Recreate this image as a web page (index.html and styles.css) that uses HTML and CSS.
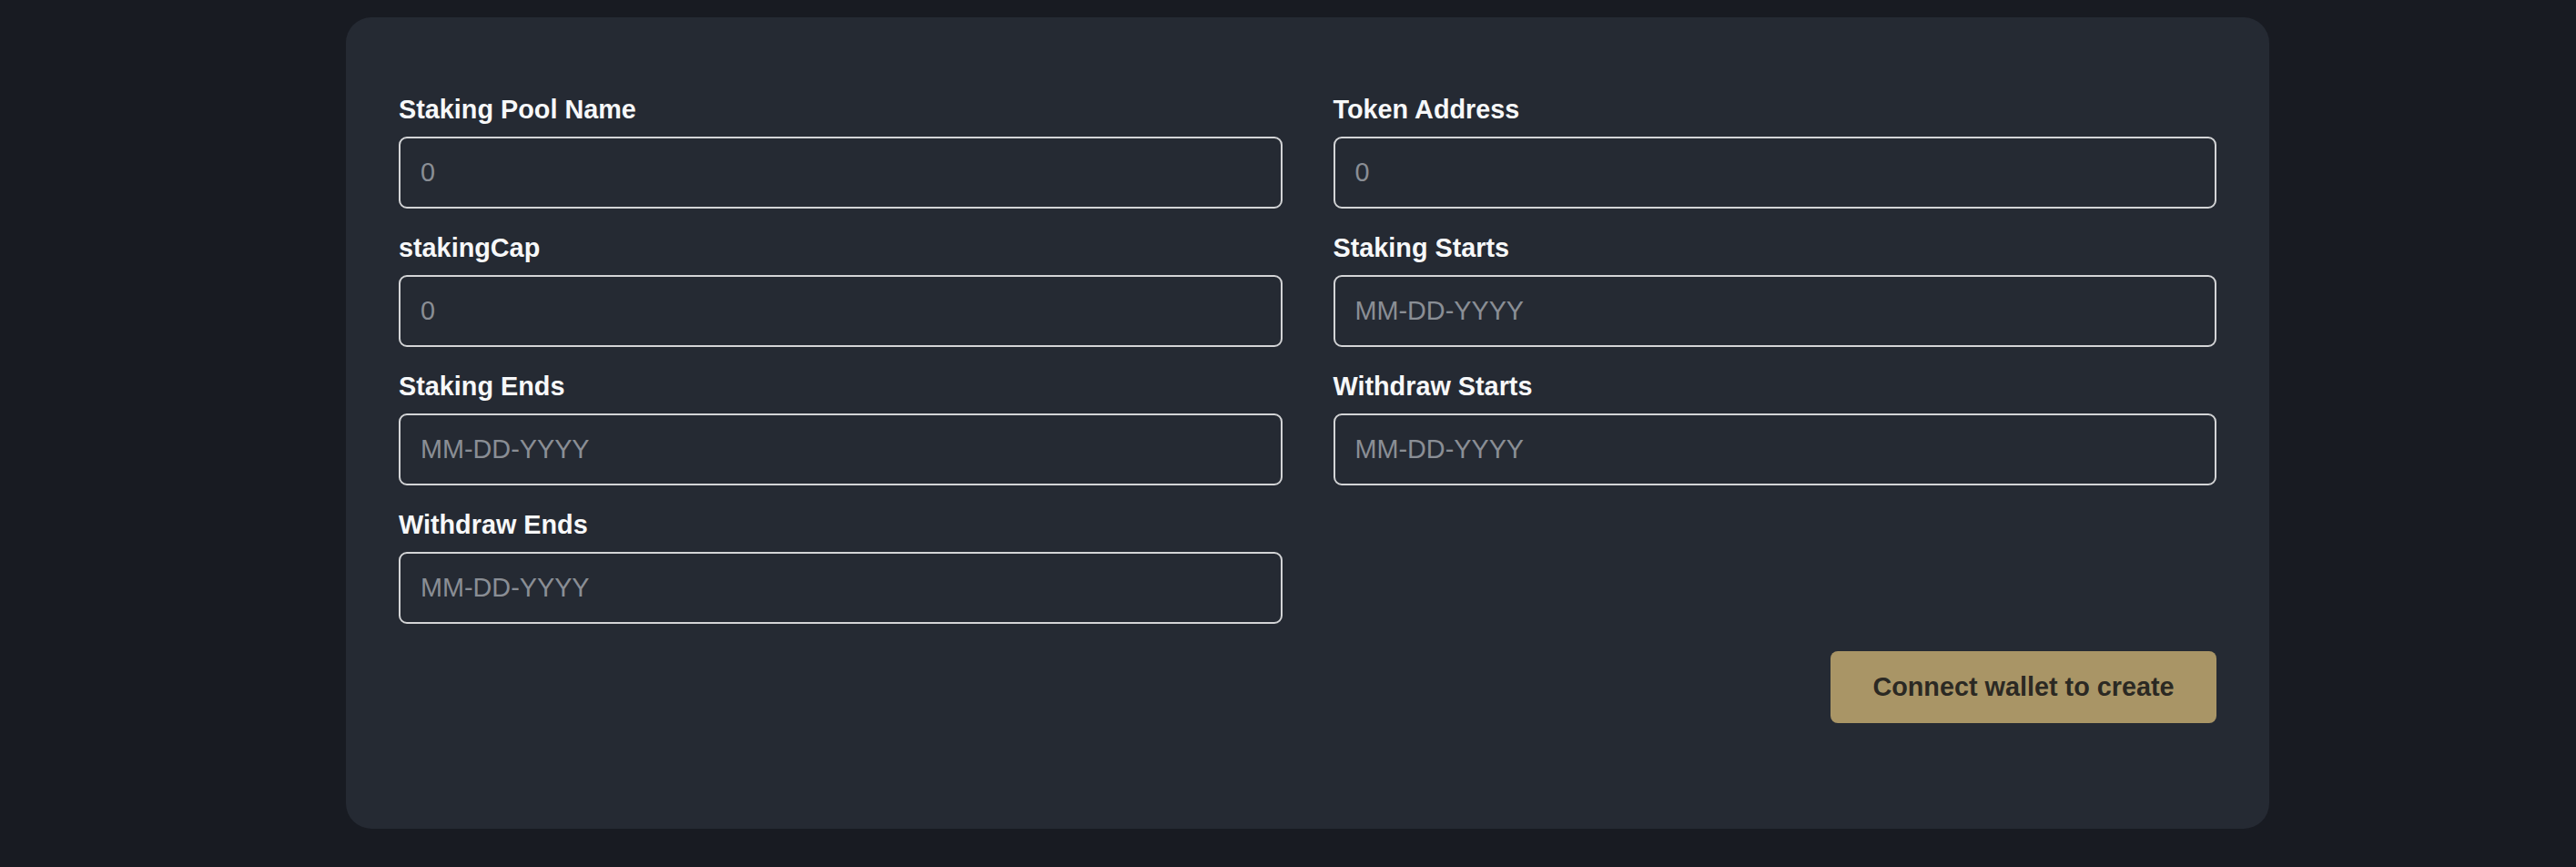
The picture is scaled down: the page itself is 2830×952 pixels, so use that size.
FILE: index.html
```html
<!DOCTYPE html>
<html>
<head>
<meta charset="utf-8">
<link rel="stylesheet" href="styles.css">
</head>
<body>
<main class="card">
  <form class="form">
    <div class="grid">
      <div class="field">
        <label class="label">Staking Pool Name</label>
        <input class="input" type="text" placeholder="0">
      </div>
      <div class="field">
        <label class="label">Token Address</label>
        <input class="input" type="text" placeholder="0">
      </div>
      <div class="field">
        <label class="label">stakingCap</label>
        <input class="input" type="text" placeholder="0">
      </div>
      <div class="field">
        <label class="label">Staking Starts</label>
        <input class="input" type="text" placeholder="MM-DD-YYYY">
      </div>
      <div class="field">
        <label class="label">Staking Ends</label>
        <input class="input" type="text" placeholder="MM-DD-YYYY">
      </div>
      <div class="field">
        <label class="label">Withdraw Starts</label>
        <input class="input" type="text" placeholder="MM-DD-YYYY">
      </div>
      <div class="field">
        <label class="label">Withdraw Ends</label>
        <input class="input" type="text" placeholder="MM-DD-YYYY">
      </div>
    </div>
    <div class="actions">
      <button class="btn" type="button">Connect wallet to create</button>
    </div>
  </form>
</main>
</body>
</html>
```
FILE: styles.css
```css
html, body {
  margin: 0;
  padding: 0;
  background: #181b22;
  height: 100%;
}
body {
  font-family: "Liberation Sans", Arial, sans-serif;
}
.card {
  box-sizing: border-box;
  width: 2113px;
  height: 891px;
  margin: 19px 0 0 380px;
  padding: 84px 58px 114px;
  background: #252a33;
  border-radius: 28px;
}
.form {
  display: flex;
  flex-direction: column;
}
.grid {
  display: grid;
  grid-template-columns: 1fr 1fr;
  column-gap: 56px;
  row-gap: 26px;
}
.field {
  display: flex;
  flex-direction: column;
  gap: 13px;
}
.label {
  font-size: 28.8px;
  line-height: 34px;
  font-weight: 700;
  color: #f7f8f9;
}
.input {
  box-sizing: border-box;
  height: 79px;
  width: 100%;
  margin: 0;
  padding: 0 22px;
  background: #252a33;
  border: 2px solid #d3d4d6;
  border-radius: 9px;
  font-family: "Liberation Sans", Arial, sans-serif;
  font-size: 28.8px;
  color: #e6e6e6;
  outline: none;
}
.input::placeholder {
  color: #8a8e95;
}
.actions {
  display: flex;
  justify-content: flex-end;
  margin-top: 30px;
}
.btn {
  box-sizing: border-box;
  height: 79px;
  width: 424px;
  padding: 0;
  border: none;
  border-radius: 8px;
  background: #a99566;
  color: #2b2923;
  font-family: "Liberation Sans", Arial, sans-serif;
  font-size: 28.8px;
  font-weight: 700;
}
```
